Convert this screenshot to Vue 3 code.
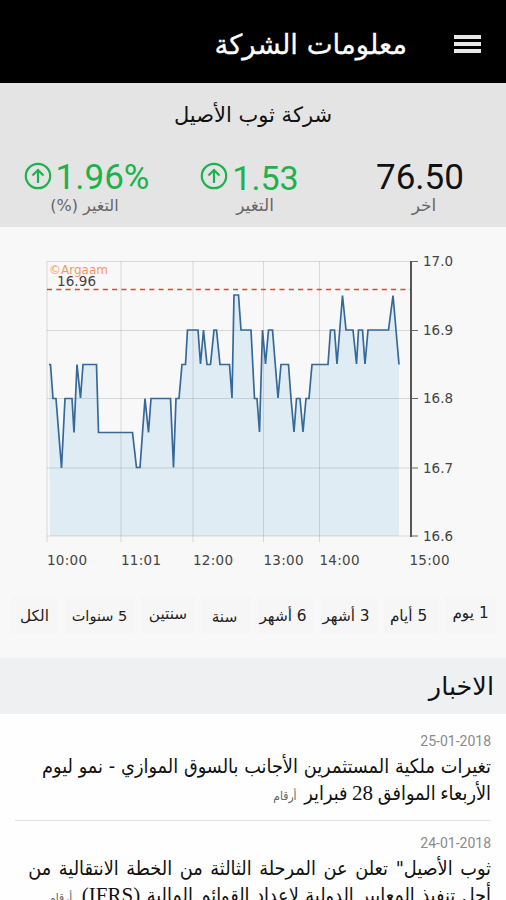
<script setup>
import { ref } from 'vue'

const stats = [
  { value: '76.50', label: 'اخر', up: false },
  { value: '1.53', label: 'التغير', up: true },
  { value: '1.96%', label: 'التغير (%)', up: true }
]

const xTicks = [
  { x: 47, label: '10:00' },
  { x: 121, label: '11:01' },
  { x: 193, label: '12:00' },
  { x: 263.5, label: '13:00' },
  { x: 319.5, label: '14:00' },
  { x: 409.5, label: '15:00' }
]

const yTicks = [
  { y: 34.5, label: '17.0' },
  { y: 103.5, label: '16.9' },
  { y: 171.5, label: '16.8' },
  { y: 241, label: '16.7' },
  { y: 309, label: '16.6' }
]

const line =
  '49,137.5 50.5,137.5 53,171.5 56,171.5 61.5,241 65,171.5 72,171.5 74,205.5 77,137.5 80.5,171 83,137.5 96.5,137.5 98.5,205.5 132.5,205.5 136.5,240.5 140,240.5 145,171.5 148.5,205.5 151,171.5 170.5,171.5 173.5,240.5 176,171.5 179,171.5 182,137.5 185.5,137.5 187.5,103 198,103 200.5,137 203.5,103 207,137.5 210.5,137.5 214,103 216.5,103 220,137.5 229.5,137.5 232,171 234,68 238.5,68 241,103 251,103 254.5,171.5 257,171.5 259.5,205 262.5,103 265.5,137 268.5,103 272.5,103 278,171 281,137.5 288.5,137.5 291,171.5 294,205 296.5,171.5 300,171.5 303,205 306,171.5 309,171.5 312,137.5 328,137.5 330.5,103 334.5,103 337,137 342.5,68.5 346,103 353,103 356.5,137 358.5,103 362.5,103 365,137 368,103 388.5,103 393,68.5 399,137.5'

const periods = [
  { label: '1 يوم', size: 'p1' },
  { label: '5 أيام', size: 'p2' },
  { label: '3 أشهر', size: 'p3' },
  { label: '6 أشهر', size: 'p4' },
  { label: 'سنة', size: 'p5' },
  { label: 'سنتين', size: 'p6' },
  { label: '5 سنوات', size: 'p7' },
  { label: 'الكل', size: 'p8' }
]
const selected = ref('')
</script>

<template>
  <div class="app" dir="rtl">
    <header>
      <button class="menu"><span></span><span></span><span></span></button>
      <h1>معلومات الشركة</h1>
    </header>

    <section class="summary">
      <h2>شركة ثوب الأصيل</h2>
      <div class="stats">
        <div v-for="s in stats" :key="s.value" class="stat">
          <div class="value" :class="{ up: s.up }" dir="ltr">
            <svg v-if="s.up" width="28" height="28" viewBox="0 0 28 28">
              <circle cx="14" cy="14" r="12.2" />
              <path d="M14 21V8.500M8.500 13.500L14 8l5.500 5.500" />
            </svg>
            <span>{{ s.value }}</span>
          </div>
          <div class="label">{{ s.label }}</div>
        </div>
      </div>
    </section>

    <section class="chart" dir="ltr">
      <svg width="506" height="358" viewBox="0 0 506 358">
        <polygon :points="'50,309 ' + line + ' 399,309'" class="area" />
        <g class="grid">
          <path v-for="t in yTicks" :key="t.label" :d="`M47 ${t.y}H411`" />
          <path v-for="t in xTicks.slice(0, 5)" :key="t.label" :d="`M${t.x} 34.500V315`" />
        </g>
        <path d="M47 62.500H411" class="limit" />
        <polyline :points="line" class="line" />
        <path d="M411 34V310" class="axis" />
        <path v-for="t in yTicks" :key="t.label" :d="`M411 ${t.y}H418`" class="tick" />
        <text x="49" y="47" class="brand" textLength="59">©Argaam</text>
        <text x="57" y="59" class="num" textLength="39">16.96</text>
        <text v-for="t in yTicks" :key="t.label" x="423" :y="t.y + 4.500" class="num">{{ t.label }}</text>
        <text v-for="t in xTicks" :key="t.label" :x="t.x" y="338" class="num" textLength="40">{{ t.label }}</text>
      </svg>
    </section>

    <nav>
      <button
        v-for="p in periods"
        :key="p.label"
        :class="[p.size, { active: selected === p.label }]"
        @click="selected = p.label"
      >
        {{ p.label }}
      </button>
    </nav>

    <h3>الاخبار</h3>

    <section class="news">
      <article>
        <time>25-01-2018</time>
        <p class="even">تغيرات ملكية المستثمرين الأجانب بالسوق الموازي - نمو ليوم</p>
        <p class="tight">الأربعاء الموافق <span class="latin">28</span> فبراير <small>أرقام</small></p>
      </article>
      <article>
        <time>24-01-2018</time>
        <p class="loose">ثوب الأصيل" تعلن عن المرحلة الثالثة من الخطة الانتقالية من</p>
        <p class="wide">أجل تنفيذ المعايير الدولية لإعداد القوائم المالية <span class="latin">(IFRS)</span> <small>أرقام</small></p>
      </article>
    </section>
  </div>
</template>

<style>
body {
  margin: 0;
  overflow: hidden;
}
</style>

<style scoped>
.app {
  width: 506px;
  height: 900px;
  overflow: hidden;
  background: #f8f8f8;
  font-family: 'DejaVu Sans', sans-serif;
  color: #111;
}
h1,
h2,
h3,
p {
  margin: 0;
  font-weight: normal;
  white-space: nowrap;
}
button {
  border: 0;
  padding: 0;
  font-family: inherit;
}
header {
  display: flex;
  align-items: center;
  height: 83px;
  background: #000;
  color: #fff;
}
.menu {
  display: flex;
  flex-direction: column;
  gap: 3px;
  width: 27px;
  margin: 4px 25px 0 47px;
  background: none;
}
.menu span {
  height: 4px;
  background: #e8e8e8;
}
h1 {
  font-size: 27.5px;
  padding-top: 4px;
  -webkit-text-stroke: 0.3px #fff;
}
.summary {
  height: 144px;
  background: #e4e4e4;
}
h2 {
  font-size: 21px;
  line-height: 64px;
  text-align: center;
}
.stats {
  display: grid;
  grid-template-columns: 172px 169px 157px;
  padding-top: 11px;
}
.stat {
  text-align: center;
}
.value {
  display: flex;
  align-items: center;
  justify-content: center;
  gap: 4px;
  height: 38px;
  font: 35px/38px Roboto, sans-serif;
}
.value span {
  padding-top: 1px;
}
.up {
  color: #1db24b;
}
.stat:nth-child(2) .value {
  font-size: 34px;
}
.value svg {
  fill: none;
  stroke: #1db24b;
  stroke-width: 2.2;
  margin-bottom: 2px;
}
.label {
  padding-left: 8px;
  font-size: 17px;
  line-height: 19px;
  color: #666;
}
.stat:nth-child(2) .label {
  padding-left: 11px;
}
.stat:last-child .label {
  padding: 0 4px 0 0;
  font-size: 16px;
}
.chart {
  height: 358px;
}
.chart svg {
  display: block;
}
.area {
  fill: #dfecf4;
}
.grid {
  stroke: #707880;
  stroke-opacity: 0.25;
}
.limit {
  stroke: #ee3b3b;
  stroke-width: 1.5;
  stroke-dasharray: 5 4.300;
}
.line {
  fill: none;
  stroke: #36699a;
  stroke-width: 1.7;
}
.axis {
  stroke: #444;
  stroke-width: 1.8;
}
.tick {
  stroke: #666;
}
.num {
  font-size: 13.500px;
  fill: #444;
}
.brand {
  font-size: 12px;
  fill: #ff966b;
}
nav {
  display: flex;
  gap: 7px;
  height: 73px;
  padding: 12px 10px 0;
  box-sizing: border-box;
}
nav button {
  height: 37px;
  padding-top: 1px;
  background: #f6f6f6;
  font-size: 15.3px;
  color: #222;
  white-space: nowrap;
}
nav .p1 {
  width: 51px;
  padding: 0 0 5px;
}
nav .p2 {
  width: 54px;
  padding-right: 5px;
}
nav .p3 {
  width: 56px;
  padding-right: 6px;
}
nav .p4 {
  width: 56px;
  padding-right: 6px;
}
nav .p5 {
  width: 49px;
  padding: 2px 4px 0 0;
}
nav .p6 {
  width: 54px;
  padding-bottom: 4px;
}
nav .p7 {
  width: 69px;
  font-size: 14.5px;
}
.p8 {
  width: 47px;
}
h3 {
  height: 56px;
  padding-right: 12px;
  background: #eff0f2;
  font-size: 25.5px;
  line-height: 57px;
}
.news {
  background: #fefefe;
  padding: 0 15px;
}
article {
  height: 89px;
  padding-top: 17px;
  border-bottom: 1px solid #e2e2e2;
}
article + article {
  padding-top: 12px;
}
time {
  display: block;
  font: 14px/20px Roboto, sans-serif;
  color: #8b8b8b;
}
p {
  font-family: 'DejaVu Sans Condensed', 'DejaVu Sans', sans-serif;
  font-size: 19.7px;
  font-stretch: condensed;
  line-height: 27px;
}
time + p {
  padding-top: 2px;
}
.even {
  word-spacing: 0.2px;
}
.tight {
  word-spacing: -1px;
}
.loose {
  word-spacing: 2px;
}
.wide {
  word-spacing: 0.9px;
}
.latin {
  font-family: 'Liberation Serif', serif;
  font-size: 21px;
}
small {
  margin-right: 3px;
  font-size: 12px;
  color: #666;
}
</style>
